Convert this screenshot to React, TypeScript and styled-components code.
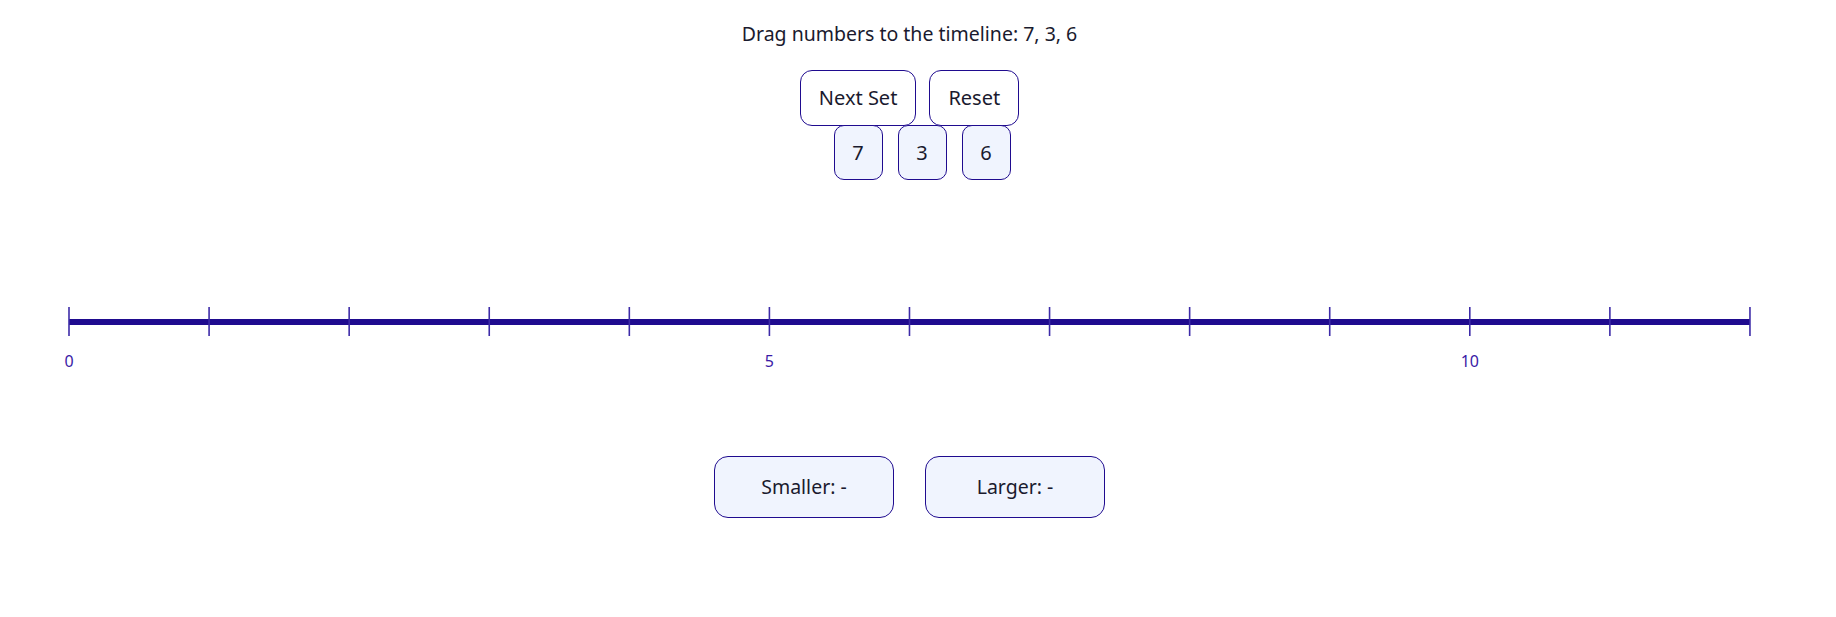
import React from "react";
import styled, { createGlobalStyle } from "styled-components";

const GlobalStyle = createGlobalStyle`
  body {
    margin: 0;
    background: #ffffff;
    font-family: "Noto Sans", "Open Sans", sans-serif;
    color: #1a1a2e;
  }
`;

const INK = "#1f0b8f";
const TICK = "#3d2ba8";
const PALE = "#f0f4fe";

const numbers = [7, 3, 6];
const TICK_COUNT = 12;
const TICK_GAP = 140.08;
const LINE_START = 10;

const Page = styled.div`
  width: 1819px;
  display: flex;
  flex-direction: column;
  align-items: center;
  padding-top: 21px;
`;

const Prompt = styled.p`
  margin: 0;
  font-size: 19.5px;
  line-height: 26px;
`;

const Controls = styled.div`
  display: flex;
  gap: 13px;
  margin-top: 23px;
`;

const ActionButton = styled.button`
  font-family: inherit;
  font-size: 20px;
  line-height: 26px;
  color: #1a1a2e;
  background: #ffffff;
  border: 1px solid ${INK};
  border-radius: 12px;
  padding: 14px 18px;
  cursor: pointer;
`;

const Tiles = styled.div`
  display: flex;
  gap: 15px;
  margin-top: -1px;
  padding-left: 25px;
`;

const Tile = styled.div`
  box-sizing: border-box;
  width: 49px;
  padding: 14px 0;
  font-size: 20px;
  line-height: 25px;
  text-align: center;
  background: ${PALE};
  border: 1px solid ${INK};
  border-radius: 10px;
  cursor: grab;
`;

const TimelineWrap = styled.div`
  margin-top: 111px;
`;

const Results = styled.div`
  display: flex;
  gap: 31px;
  margin-top: 70px;
`;

const ResultBox = styled.div`
  box-sizing: border-box;
  width: 180px;
  padding: 17px 0;
  font-size: 19.5px;
  line-height: 26px;
  text-align: center;
  background: ${PALE};
  border: 1px solid ${INK};
  border-radius: 14px;
`;

const Timeline = () => {
  const end = LINE_START + TICK_COUNT * TICK_GAP;
  return (
    <svg width={end + LINE_START} height={90}>
      <line x1={LINE_START} x2={end} y1={31} y2={31} stroke={INK} strokeWidth={6} />
      {Array.from({ length: TICK_COUNT + 1 }, (_, i) => {
        const x = LINE_START + i * TICK_GAP;
        return (
          <g key={i}>
            <line x1={x} x2={x} y1={16} y2={45} stroke={TICK} strokeWidth={1.6} />
            {i % 5 === 0 && (
              <text
                x={x}
                y={76}
                textAnchor="middle"
                fontSize={16}
                fill="#3a1aa6"
                fontFamily="Noto Sans, sans-serif"
              >
                {i}
              </text>
            )}
          </g>
        );
      })}
    </svg>
  );
};

export default function App() {
  return (
    <Page>
      <GlobalStyle />
      <Prompt>Drag numbers to the timeline: {numbers.join(", ")}</Prompt>
      <Controls>
        <ActionButton>Next Set</ActionButton>
        <ActionButton>Reset</ActionButton>
      </Controls>
      <Tiles>
        {numbers.map((n) => (
          <Tile key={n}>{n}</Tile>
        ))}
      </Tiles>
      <TimelineWrap>
        <Timeline />
      </TimelineWrap>
      <Results>
        <ResultBox>Smaller: -</ResultBox>
        <ResultBox>Larger: -</ResultBox>
      </Results>
    </Page>
  );
}
